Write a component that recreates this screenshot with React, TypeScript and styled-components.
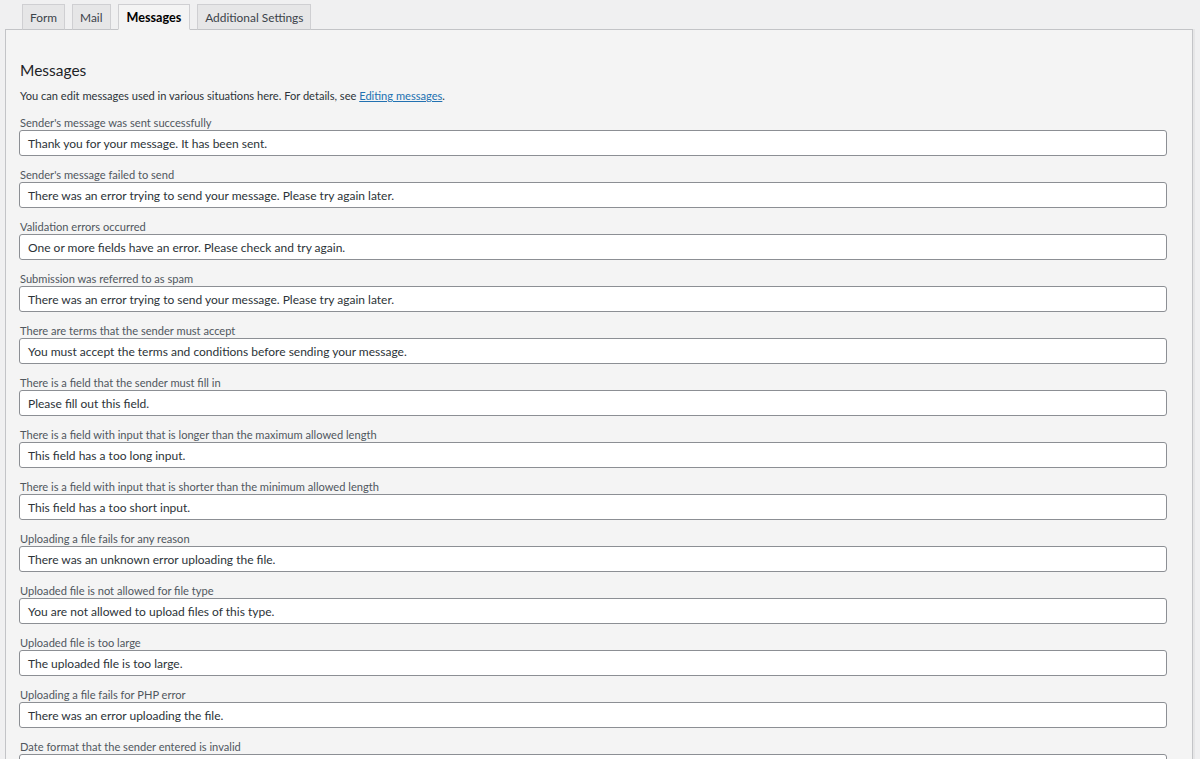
import React from "react";
import styled, { createGlobalStyle } from "styled-components";

const Global = createGlobalStyle`
  html, body { margin: 0; padding: 0; background: #f0f0f1; }
  body { font-family: Lato, "Noto Sans", sans-serif; color: #1d2327; }
`;

const Page = styled.div`
  padding: 4px 7px 0 5px;
`;

const TabBar = styled.div`
  display: flex;
  gap: 7px;
  padding-left: 17px;
  margin-bottom: -1px;
  position: relative;
  z-index: 1;
`;

const Tab = styled.div<{ $active?: boolean }>`
  height: 26px;
  box-sizing: border-box;
  padding: 0 ${(p) => (p.$active ? "8px" : "7px")};
  display: flex;
  align-items: center;
  font-size: ${(p) => (p.$active ? "12.6px" : "11.9px")};
  border: 1px solid #cfcfd2;
  border-bottom: ${(p) => (p.$active ? "1px solid #f4f4f4" : "1px solid #c3c4c7")};
  background: ${(p) => (p.$active ? "#f4f4f4" : "#e6e6e7")};
  color: ${(p) => (p.$active ? "#000" : "#3c434a")};
  font-weight: ${(p) => (p.$active ? 700 : 400)};
`;

const Panel = styled.div`
  border: 1px solid #c3c4c7;
  background: #f4f4f4;
  padding: 29px 25px 20px 13px;
  box-shadow: 2px 0 0 #e6e6e7;
`;

const Heading = styled.h2`
  margin: 0 0 8px 1px;
  font-size: 15.5px;
  font-weight: 400;
  line-height: 22px;
  color: #1d2327;
`;

const Desc = styled.p`
  margin: 0 0 13px 1px;
  font-size: 11.1px;
  line-height: 14px;
  color: #2c3338;
`;

const Link = styled.a`
  color: #2271b1;
  text-decoration: underline;
`;

const Field = styled.div`
  display: flex;
  flex-direction: column;
  margin-bottom: 12px;
`;

const Label = styled.label`
  font-size: 11.1px;
  line-height: 14px;
  color: #50575e;
  margin-left: 1px;
`;

const Input = styled.div`
  height: 26px;
  box-sizing: border-box;
  border: 1px solid #8c8f94;
  border-radius: 3px;
  background: #fff;
  padding: 0 8px;
  display: flex;
  align-items: center;
  font-size: 12px;
  color: #2c3338;
`;

const fields: [string, string][] = [
  ["Sender's message was sent successfully", "Thank you for your message. It has been sent."],
  ["Sender's message failed to send", "There was an error trying to send your message. Please try again later."],
  ["Validation errors occurred", "One or more fields have an error. Please check and try again."],
  ["Submission was referred to as spam", "There was an error trying to send your message. Please try again later."],
  ["There are terms that the sender must accept", "You must accept the terms and conditions before sending your message."],
  ["There is a field that the sender must fill in", "Please fill out this field."],
  ["There is a field with input that is longer than the maximum allowed length", "This field has a too long input."],
  ["There is a field with input that is shorter than the minimum allowed length", "This field has a too short input."],
  ["Uploading a file fails for any reason", "There was an unknown error uploading the file."],
  ["Uploaded file is not allowed for file type", "You are not allowed to upload files of this type."],
  ["Uploaded file is too large", "The uploaded file is too large."],
  ["Uploading a file fails for PHP error", "There was an error uploading the file."],
  ["Date format that the sender entered is invalid", "Please enter a date in YYYY-MM-DD format."],
  ["Date is earlier than minimum limit", "This field has a too early date."],
];

export default function App() {
  return (
    <Page>
      <Global />
      <TabBar>
        <Tab>Form</Tab>
        <Tab>Mail</Tab>
        <Tab $active>Messages</Tab>
        <Tab>Additional Settings</Tab>
      </TabBar>
      <Panel>
        <Heading>Messages</Heading>
        <Desc>
          You can edit messages used in various situations here. For details, see{" "}
          <Link href="#">Editing messages</Link>.
        </Desc>
        {fields.map(([l, v]) => (
          <Field key={l}>
            <Label>{l}</Label>
            <Input>{v}</Input>
          </Field>
        ))}
      </Panel>
    </Page>
  );
}
